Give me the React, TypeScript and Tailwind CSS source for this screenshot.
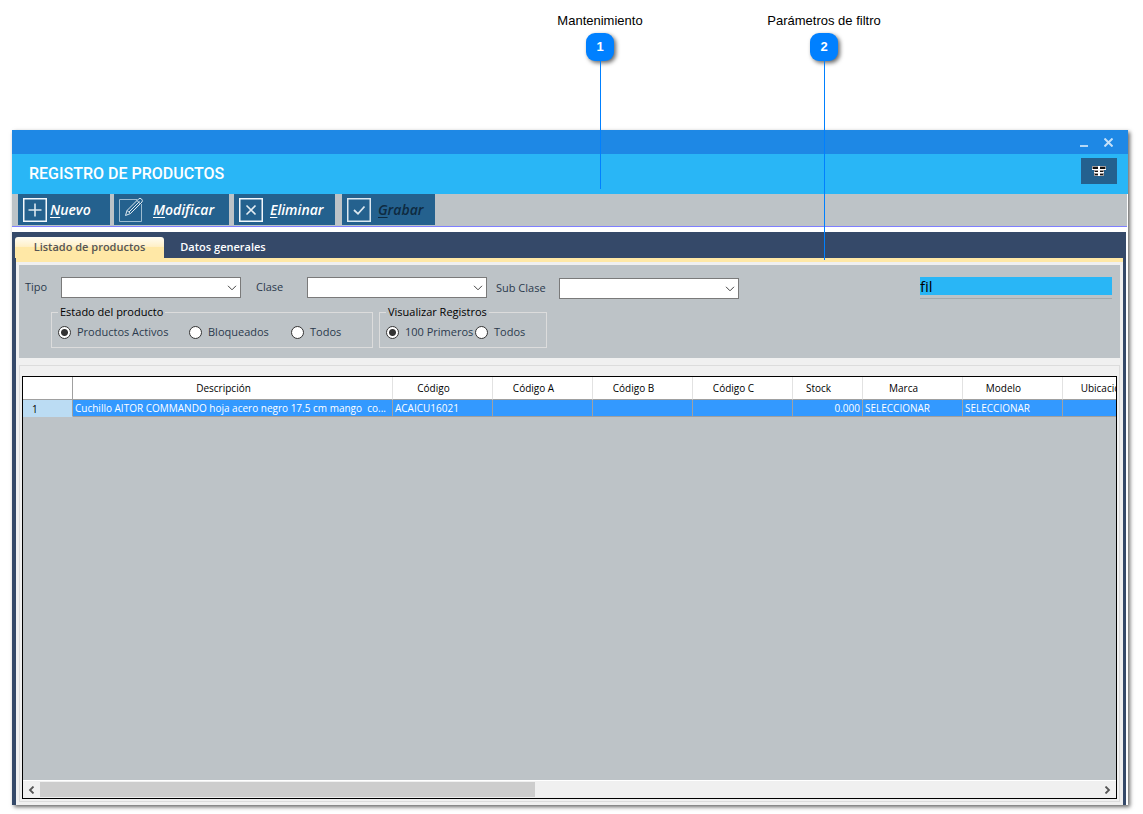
import { useState } from "react";
import type { ReactNode } from "react";
import clsx from "clsx";

const COLUMNS = [
  { label: "", width: "w-[50px]" },
  { label: "Descripción", width: "w-[320px]" },
  { label: "Código", width: "w-[100px]" },
  { label: "Código A", width: "w-[100px]" },
  { label: "Código B", width: "w-[100px]" },
  { label: "Código C", width: "w-[100px]" },
  { label: "Stock", width: "w-[70px]" },
  { label: "Marca", width: "w-[100px]" },
  { label: "Modelo", width: "w-[100px]" },
  { label: "Ubicación", width: "w-[100px]" },
];

const ROWS = [
  ["Cuchillo AITOR COMMANDO hoja acero negro 17.5 cm mango  co...", "ACAICU16021", "", "", "", "0.000", "SELECCIONAR", "SELECCIONAR", ""],
];

function Callout({ n, label, className, line }: { n: number; label: string; className: string; line: string }) {
  return (
    <div className={clsx("absolute top-[13px] z-10 flex w-40 flex-col items-center font-['Liberation_Sans',Arial,sans-serif] text-[13px] leading-4 text-black", className)}>
      <span>{label}</span>
      <span className="mt-1 flex h-7 w-7 items-center justify-center rounded-[9px] bg-[#0080ff] font-bold text-white shadow-[2px_2px_4px_rgba(0,0,0,0.6)]">
        {n}
      </span>
      <span className={clsx("w-px bg-[#0080ff]", line)} />
    </div>
  );
}

function ToolButton({ text, width, icon, gap, disabled }: { text: string; width: string; icon: ReactNode; gap: string; disabled?: boolean }) {
  return (
    <button
      type="button"
      disabled={disabled}
      className={clsx("flex h-[31px] items-center bg-[#24618e] pl-[5px] text-[14px] font-semibold italic", width, gap, disabled ? "text-[#0e2a40]" : "text-white")}
    >
      <svg width="24" height="24" viewBox="0 0 24 24" fill="none" className="shrink-0 overflow-visible">{icon}</svg>
      <span><span className="underline underline-offset-2">{text[0]}</span>{text.slice(1)}</span>
    </button>
  );
}

function Combo({ id, label, labelWidth, className }: { id: string; label: string; labelWidth: string; className?: string }) {
  return (
    <div className={clsx("flex shrink-0 items-center", className)}>
      <label htmlFor={id} className={labelWidth}>{label}</label>
      <div className="relative">
        <select id={id} className="block h-[21px] w-[180px] appearance-none border border-[#7a7a7a] bg-white px-1">
          <option value=""></option>
        </select>
        <svg width="10" height="6" viewBox="0 0 10 6" fill="none" stroke="#444" className="pointer-events-none absolute top-2 right-1">
          <path d="M1 0.8L5 4.8L9 0.8" />
        </svg>
      </div>
    </div>
  );
}

function Radio({ name, label, checked, onChange, className }: { name: string; label: string; checked: boolean; onChange: () => void; className?: string }) {
  return (
    <label className={clsx("flex items-center gap-1.5 whitespace-nowrap", className)}>
      <input
        type="radio"
        name={name}
        checked={checked}
        onChange={onChange}
        className="h-[13px] w-[13px] shrink-0 appearance-none rounded-full border border-[#333] bg-white checked:bg-[radial-gradient(circle,#333_0_3px,#fff_4px)]"
      />
      {label}
    </label>
  );
}

function Group({ title, name, options, widths, className }: { title: string; name: string; options: string[]; widths: string[]; className: string }) {
  const [value, setValue] = useState(options[0]);
  return (
    <fieldset className={clsx("h-11 border border-[#dcdcdc] pl-1.5", className)}>
      <legend className="px-0.5 leading-4 text-black">{title}</legend>
      <div className="flex pt-1 leading-4">
        {options.map((o, i) => (
          <Radio key={o} name={name} label={o} checked={value === o} onChange={() => setValue(o)} className={widths[i]} />
        ))}
      </div>
    </fieldset>
  );
}

export default function App() {
  const [tab, setTab] = useState(0);
  const [filter, setFilter] = useState("fil");

  return (
    <div className="relative flex min-h-screen flex-col bg-white pt-[130px] pr-[15px] pb-[9px] pl-3 font-['Open_Sans','Noto_Sans',sans-serif] text-[11px] text-[#2b3a4d]">
      <Callout n={1} label="Mantenimiento" className="left-[520px]" line="h-[128px]" />
      <Callout n={2} label="Parámetros de filtro" className="left-[744px]" line="h-[199px]" />

      <main className="flex flex-1 flex-col bg-white shadow-[2px_2px_4px_rgba(0,0,0,0.6)]">
        {/* Title bar */}
        <div className="flex h-6 items-center justify-end gap-4 bg-[#1e88e5] pr-[15px]">
          <button type="button" aria-label="Minimizar">
            <svg width="8" height="10" viewBox="0 0 8 10"><path d="M0 8h8v2H0z" fill="#b4d8f7" /></svg>
          </button>
          <button type="button" aria-label="Cerrar">
            <svg width="9" height="9" viewBox="0 0 9 9" stroke="#c4e0f9" strokeWidth="2"><path d="M0.5 0.5l8 8M8.5 0.5l-8 8" /></svg>
          </button>
        </div>
        <header className="flex h-10 items-center justify-between bg-[#29b6f6] pr-[11px] pl-[17px]">
          <h1 className="font-['Roboto',sans-serif] text-[16px] font-medium text-white">REGISTRO DE PRODUCTOS</h1>
          <button type="button" aria-label="Columnas" className="mb-1.5 flex h-[26px] w-9 items-center justify-center bg-[#24618e]">
            <svg width="14" height="10" viewBox="0 0 14 10" shapeRendering="crispEdges">
              <path d="M0 0h14v4h-2v6H2V4H0z" fill="#a39a98" />
              <path d="M1 1h12v2H1zM3 5h8v1H3zM3 8h8v1H3z" fill="#111" />
              <path d="M0 3h14v1H0zM2 6h10v1H2zM6 0h2v10H6z" fill="#fff" />
            </svg>
          </button>
        </header>

        {/* Toolbar */}
        <div className="mr-px flex h-[33px] border-b border-[#7f7fff] bg-[#bdc3c7] pl-1.5">
          <ToolButton
            text="Nuevo"
            width="w-[92px]"
            gap="gap-[3px]"
            icon={<><path d="M0.75 0.75h22.5v22.5H0.75z" stroke="#f4f8fb" strokeWidth="1.5" /><path d="M12 5.5v13M5.5 12h13" stroke="#dce8f0" strokeWidth="1.6" /></>}
          />
          <ToolButton
            text="Modificar"
            width="w-[115px] ml-1"
            gap="gap-2.5"
            icon={<><path d="M18 1.5H0.5v22h22V6" stroke="#9dbbd0" /><path d="M6.5 17.5L8 12.5L19.5 1Q21 -0.5 22.5 1T23 4L11.5 15.5zM18 2.5l3.5 3.5M8 12.5l3.5 3M10 14L20.5 3.5" stroke="#dce8f0" /></>}
          />
          <ToolButton
            text="Eliminar"
            width="w-[101px] ml-[5px]"
            gap="gap-[7px]"
            icon={<><path d="M0.75 0.75h22.5v22.5H0.75z" stroke="#f4f8fb" strokeWidth="1.5" /><path d="M7.5 7.5l9 9M16.5 7.5l-9 9" stroke="#e4edf3" strokeWidth="1.6" /></>}
          />
          <ToolButton
            text="Grabar"
            width="w-[93px] ml-[7px]"
            gap="gap-[7px]"
            disabled
            icon={<><path d="M0.75 0.75h22.5v22.5H0.75z" stroke="#dce8f0" strokeWidth="1.5" /><path d="M7 12l4 3.8L17.5 8.5" stroke="#dce8f0" strokeWidth="1.8" /></>}
          />
        </div>

        <section className="mt-[5px] mr-0.5 flex flex-1 flex-col bg-[#354969] pr-[3px] pl-1">
          {/* Tabs */}
          <div role="tablist" className="-ml-px flex h-[26px] items-end pt-[5px]">
            {["Listado de productos", "Datos generales"].map((t, i) => (
              <button
                key={t}
                type="button"
                role="tab"
                aria-selected={tab === i}
                onClick={() => setTab(i)}
                className={clsx(
                  "h-[21px] rounded-t-[3px] font-semibold whitespace-nowrap",
                  i === 0 ? "w-[149px]" : "w-[118px]",
                  tab === i ? "bg-linear-to-b from-[#fffcf2] from-0% via-[#fff0c8] via-45% to-[#ffe8a6] to-50% text-[#555]" : "text-white"
                )}
              >
                {t}
              </button>
            ))}
          </div>

          <div className="flex flex-1 flex-col border-t-4 border-[#ffe8a6] bg-[#f0f0f0] px-[3px] pt-[3px] pb-[3px]">
            {/* Filters */}
            <form className="flex h-[93px] flex-col bg-[#bdc3c7] pt-3 pr-2 pl-1.5" onSubmit={(e) => e.preventDefault()}>
              <div className="flex items-start">
                <Combo id="tipo" label="Tipo" labelWidth="w-9" />
                <Combo id="clase" label="Clase" labelWidth="w-[51px]" className="ml-[15px]" />
                <Combo id="subclase" label="Sub Clase" labelWidth="w-[63px]" className="ml-[9px] pt-px" />
                <div className="ml-auto w-48 border-b border-[#a4a9ad] pb-[3px]">
                  <input
                    aria-label="Filtro"
                    value={filter}
                    onChange={(e) => setFilter(e.target.value)}
                    className="block h-[18px] w-full bg-[#29b6f6] text-[15px] text-black outline-none"
                  />
                </div>
              </div>
              <div className="mt-[5px] flex gap-1.5 pl-[26px]">
                <Group
                  title="Estado del producto"
                  name="estado"
                  options={["Productos Activos", "Bloqueados", "Todos"]}
                  widths={["w-[131px]", "w-[102px]", ""]}
                  className="w-[322px]"
                />
                <Group
                  title="Visualizar Registros"
                  name="visualizar"
                  options={["100 Primeros", "Todos"]}
                  widths={["w-[89px]", ""]}
                  className="w-[168px]"
                />
              </div>
            </form>

            {/* Grid */}
            <div className="mt-[7px] flex flex-1 flex-col border border-[#dcdcdc] px-0.5 pt-2.5 pb-0.5">
              <div className="flex flex-1 flex-col overflow-hidden border border-black bg-[#bdc3c7]">
                <div className="flex-1 overflow-hidden">
                  <table className="w-[1140px] table-fixed border-separate border-spacing-0 text-[10px] leading-[14px]">
                    <thead>
                      <tr className="h-[23px] bg-white text-black">
                        {COLUMNS.map((c, i) => (
                          <th
                            key={i}
                            className={clsx("border-r border-b border-b-[#a0a0a0] p-0 pr-[18px] font-medium", c.width, i === 0 ? "border-r-[#a0a0a0]" : "border-r-[#e2e2e2]")}
                          >
                            {c.label}
                          </th>
                        ))}
                      </tr>
                    </thead>
                    <tbody>
                      {ROWS.map((r, i) => (
                        <tr key={i} className="h-[17px] bg-[#3399ff] text-white">
                          <th scope="row" className="border-r border-b border-[#a0a0a0] border-b-[#bbdcf3] bg-[#bbdcf3] p-0 pt-0.5 pl-[9px] text-left font-normal text-black">{i + 1}</th>
                          {r.map((v, j) => (
                            <td key={j} className={clsx("border-r border-b border-[#a0a0a0] px-0.5 py-0 font-medium whitespace-pre", j === 5 && "text-right")}>{v}</td>
                          ))}
                        </tr>
                      ))}
                    </tbody>
                  </table>
                </div>
                {/* Scroll bar */}
                <div className="flex h-[18px] items-center border-t border-white bg-[#f0f0f0]">
                  <button type="button" aria-label="Desplazar a la izquierda" className="flex h-full w-[17px] items-center justify-center">
                    <svg width="7" height="8" viewBox="0 0 7 8" fill="none" stroke="#555" strokeWidth="1.8"><path d="M5.5 0.5L2 4l3.5 3.5" /></svg>
                  </button>
                  <div className="h-[15px] flex-1">
                    <div className="h-full w-[46.7%] bg-[#cdcdcd]" />
                  </div>
                  <button type="button" aria-label="Desplazar a la derecha" className="flex h-full w-[17px] items-center justify-center">
                    <svg width="7" height="8" viewBox="0 0 7 8" fill="none" stroke="#555" strokeWidth="1.8"><path d="M1.5 0.5L5 4L1.5 7.5" /></svg>
                  </button>
                </div>
              </div>
            </div>
          </div>
        </section>
      </main>
    </div>
  );
}
